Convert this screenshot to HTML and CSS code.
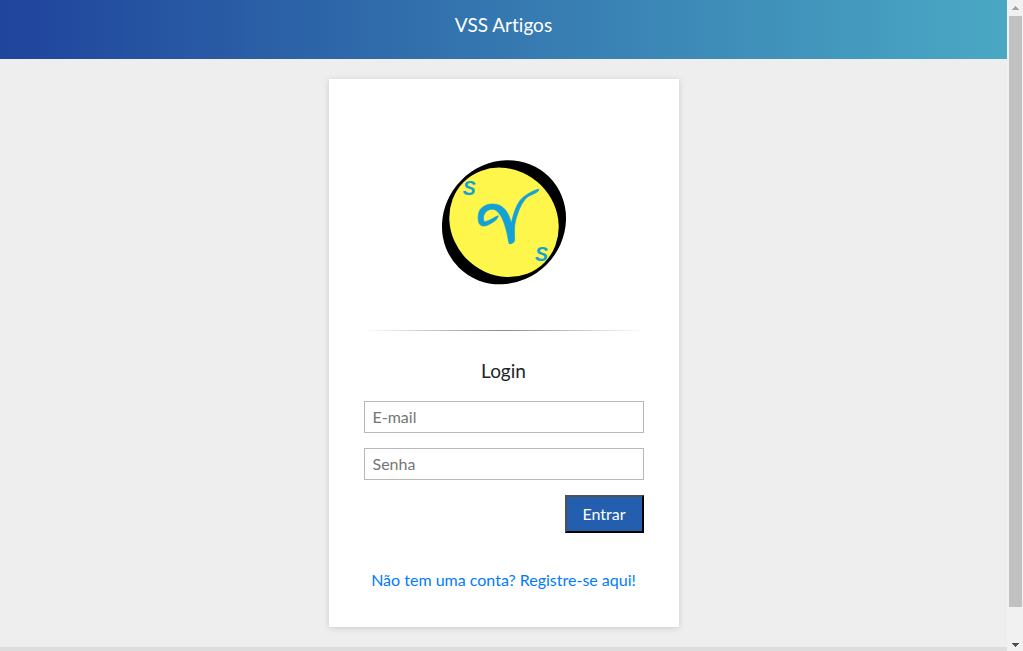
FILE: index.html
```html
<!DOCTYPE html>
<html lang="pt-BR">
<head>
<meta charset="utf-8">
<title>VSS Artigos</title>
<link rel="stylesheet" href="styles.css">
</head>
<body>
<div class="page">
  <header class="header"><h1 class="title">VSS Artigos</h1></header>
  <main class="main">
    <section class="card">
      <svg class="logo" viewBox="-3 0 450 435" role="img" aria-label="VSS">
        <ellipse cx="222" cy="217" rx="192" ry="180" transform="rotate(-45 222 217)" fill="#000"/>
        <ellipse cx="222" cy="217" rx="171" ry="157" transform="rotate(45 222 217)" fill="#fff64b"/>
        <path fill="#14a1d6" stroke="#14a1d6" stroke-width="2" stroke-linejoin="round" d="M205 197C193 200 178 214 163 215C157 205 161 188 174 181C188 174 199 179 207 190C220 206 230 238 236 276Q236 284 244 281Q253 279 254 271C253 242 252 225 260 200C267 178 277 155 290 143C303 133 324 129 327 119Q327 116 319 119C300 127 283 136 272 149C258 166 250 193 244 220C237 191 225 173 208 166C188 158 164 162 151 178C143 190 142 212 149 223C156 231 168 229 180 222C193 215 204 206 205 197Z"/>
        <text class="logo-letter" x="98" y="134">S</text>
        <text class="logo-letter" x="315" y="333">S</text>
      </svg>
      <hr class="divider">
      <h2 class="heading">Login</h2>
      <form class="form">
        <input class="field" type="email" placeholder="E-mail" aria-label="E-mail">
        <input class="field" type="password" placeholder="Senha" aria-label="Senha">
        <button class="submit" type="submit">Entrar</button>
      </form>
      <a class="register" href="#">Não tem uma conta? Registre-se aqui!</a>
    </section>
  </main>
  <footer class="footer"></footer>
</div>
<div class="scrollbar" aria-hidden="true">
  <svg class="arrow" viewBox="0 0 16 16" shape-rendering="crispEdges"><path fill="#a3a3a3" d="M8 6h1v1h1v1h1v1h1v1H5V9h1V8h1V7h1z"/></svg>
  <div class="track"><div class="thumb"></div></div>
  <svg class="arrow" viewBox="0 0 16 16" shape-rendering="crispEdges"><path fill="#505050" d="M5 8h7v1h-1v1h-1v1H9v1H8v-1H7v-1H6V9H5z"/></svg>
</div>
</body>
</html>
```
FILE: styles.css
```css
* { box-sizing: border-box; }

body {
  display: flex;
  height: 100vh;
  margin: 0;
  overflow: hidden;
  background: #eee;
  color: #212529;
  font: 16px/24px Lato, sans-serif;
  font-variant-ligatures: none;
}

.page {
  flex: 1;
  display: flex;
  flex-direction: column;
  min-width: 0;
}

.header {
  padding: 13px 16px 22px;
  background: linear-gradient(to right, #1f449c, #3578b0 50%, #4aa8c4);
  color: #fff;
  text-align: center;
}

.title,
.heading {
  margin: 0;
  font-size: 19px;
  font-weight: 400;
  line-height: 24px;
}

.main {
  flex: 1;
  padding: 20px 16px;
}

.card {
  display: flex;
  flex-direction: column;
  align-items: center;
  max-width: 350px;
  margin: 0 auto;
  padding: 71px 35px 35px;
  background: #fff;
  box-shadow: 0 1px 6px rgba(0, 0, 0, 0.15);
}

.logo {
  width: 150px;
  height: 145px;
}

.logo-letter {
  fill: #14a1d6;
  font: italic 700 58px "Liberation Sans", sans-serif;
}

.divider {
  width: 100%;
  height: 1px;
  margin: 35px 0 28px;
  border: 0;
  background: linear-gradient(to right, transparent, #8c8c8c, transparent);
}

.form {
  display: flex;
  flex-direction: column;
  gap: 15px;
  width: 100%;
  margin: 18px 0 35px;
}

.field {
  height: 32px;
  padding: 0 8px 2px;
  border: 1px solid #b8b8b8;
  background: #fff;
  font: inherit;
}

.field::placeholder { color: #757575; }

.submit {
  align-self: flex-end;
  min-width: 79px;
  height: 38px;
  padding: 0 15px;
  border: 2px solid;
  border-color: #505050 #000 #000 #505050;
  background: #235fae;
  color: #fff;
  font: inherit;
}

.register {
  color: #007bff;
  text-decoration: none;
}

.footer {
  height: 4px;
  background: #ddd;
}

.scrollbar {
  display: flex;
  flex-direction: column;
  width: 16px;
  background: #f1f1f1;
}

.arrow {
  width: 16px;
  height: 16px;
}

.track {
  flex: 1;
  padding: 0 1px 0 2px;
}

.thumb {
  height: 95.5%;
  background: #c1c1c1;
}
```
